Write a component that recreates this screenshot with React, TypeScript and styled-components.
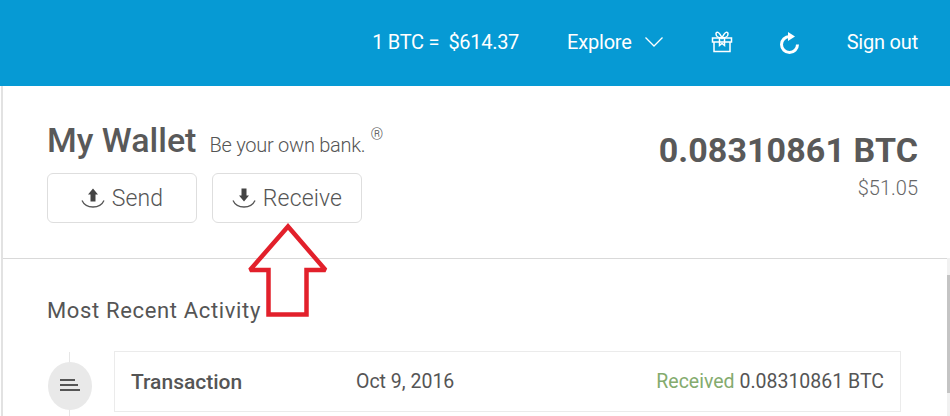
import React from 'react';
import styled, { createGlobalStyle } from 'styled-components';

const GlobalStyle = createGlobalStyle`
    html, body {
        margin: 0;
        padding: 0;
        background: #fff;
        overflow: hidden;
    }
    body {
        font-family: Roboto, "Liberation Sans", sans-serif;
        color: #555;
    }
`

const Page = styled.div`
    width: 950px;
    height: 416px;
    position: relative;
    overflow: hidden;
    background: #fff;
`

const TopBar = styled.header`
    height: 86px;
    background: #069ad4;
    color: #fff;
    display: flex;
    align-items: center;
    justify-content: flex-end;
    padding: 0 32px 3px 0;
    box-sizing: border-box;
    font-size: 20px;
    letter-spacing: -0.2px;
`

const Rate = styled.span`
    margin-right: 48px;
    white-space: pre;
    letter-spacing: -0.3px;
`

const Explore = styled.span`
    display: flex;
    align-items: center;
    gap: 12px;
    margin-right: 47px;
`

const NavIcon = styled.svg`
    display: block;
    fill: none;
    stroke: #fff;
`

const GiftIcon = styled(NavIcon)`
    margin-right: 46px;
`

const RefreshIcon = styled(NavIcon)`
    margin-right: 47px;
    margin-top: 4px;
`

const Main = styled.main`
    border-left: 2px solid #e2e2e2;
    margin-left: 1px;
`

const WalletHead = styled.section`
    height: 173px;
    box-sizing: border-box;
    border-bottom: 1px solid #d9d9d9;
    padding: 34px 32px 0 44px;
    display: flex;
    justify-content: space-between;
`

const TitleRow = styled.div`
    display: flex;
    align-items: baseline;
    height: 53px;
`

const Title = styled.h1`
    margin: 0;
    font-size: 34px;
    line-height: 40px;
    font-weight: 500;
    color: #595959;
`

const Tagline = styled.span`
    margin-left: 13px;
    font-size: 20px;
    font-weight: 300;
    letter-spacing: -0.25px;
    color: #555;
    position: relative;
`

const Mark = styled.sup`
    font-size: 16px;
    line-height: 0;
    margin-left: 5px;
    vertical-align: 12px;
`

const Actions = styled.div`
    display: flex;
    gap: 15px;
`

const ActionButton = styled.button`
    width: 150px;
    height: 50px;
    box-sizing: border-box;
    background: #fff;
    border: 1px solid #dedede;
    border-radius: 6px;
    display: flex;
    align-items: center;
    justify-content: center;
    gap: 7px;
    padding: 0;
    font-family: inherit;
    font-size: 23px;
    font-weight: 300;
    letter-spacing: 0.15px;
    color: #555;
`

const Balance = styled.div`
    text-align: right;
    padding-top: 11px;
`

const Amount = styled.div`
    font-size: 34px;
    line-height: 38px;
    font-weight: 700;
    letter-spacing: 0.1px;
    color: #595959;
`

const Fiat = styled.div`
    font-size: 20px;
    line-height: 24px;
    font-weight: 300;
    color: #666;
    margin-top: 7px;
`

const Activity = styled.section`
    padding: 38px 49px 0 44px;
`

const ActivityTitle = styled.h2`
    margin: 0 0 26px;
    font-size: 22px;
    line-height: 28px;
    font-weight: 400;
    letter-spacing: 0.65px;
    color: #555;
`

const ActivityRow = styled.div`
    display: flex;
    align-items: flex-start;
    position: relative;
`

const Timeline = styled.div`
    width: 67px;
    height: 65px;
    flex: none;
    position: relative;
    display: flex;
    justify-content: flex-start;
    padding-top: 11px;
    box-sizing: border-box;

    &::before {
        content: '';
        position: absolute;
        left: 22px;
        top: 1px;
        bottom: 0;
        width: 1px;
        background: #e6e6e6;
    }
`

const Bubble = styled.div`
    width: 44px;
    height: 48px;
    margin-left: 1px;
    padding-bottom: 3px;
    box-sizing: border-box;
    border-radius: 50%;
    background: #e9e9e9;
    display: flex;
    align-items: center;
    justify-content: center;
    position: relative;
`

const Card = styled.div`
    flex: 1;
    height: 61px;
    box-sizing: border-box;
    border: 1px solid #ebebeb;
    display: flex;
    align-items: center;
    padding: 0 16px;
    color: #555;
`

const CardTitle = styled.span`
    width: 225px;
    font-size: 21px;
    font-weight: 500;
`

const CardDate = styled.span`
    flex: 1;
    font-size: 19.5px;
`

const CardAmount = styled.span`
    font-size: 19.5px;
`

const Received = styled.span`
    color: #84ab6e;
`

const ScrollTrack = styled.div`
    position: absolute;
    right: 0;
    top: 258px;
    bottom: 0;
    width: 3px;
    background: #f1f1f1;
`

const ScrollThumb = styled.div`
    margin-top: 17px;
    height: 118px;
    background: #c4c4c4;
`

const Callout = styled.svg`
    position: absolute;
    left: 240px;
    top: 216px;
    fill: none;
    stroke: #e2202b;
    stroke-width: 4.5;
    stroke-linejoin: miter;
    stroke-miterlimit: 2;
`

const Share: React.FC<{ up: boolean }> = ({ up }) => (
    <svg width="24" height="24" viewBox="0 0 24 24">
        <path d="M1 14.5c2.5 5.5 7 6.5 11 6.5s8.500-1 11-6.500" fill="none" stroke="#555" strokeWidth="1.300" />
        {up
            ? <path d="M12 2.500L17 8.500H14.500V15.500H9.500V8.500H7Z" fill="#444" />
            : <path d="M9.500 2.500H14.500V9.500H17L12 15.500L7 9.500H9.500Z" fill="#444" />}
    </svg>
);

const App: React.FC = () => {
    return <Page>
        <GlobalStyle />
        <TopBar>
            <Rate>1 BTC =  $614.37</Rate>
            <Explore>
                Explore
                <NavIcon width="20" height="12" viewBox="0 0 20 12" strokeWidth="1.300">
                    <path d="M1.500 1.500L10 10L18.500 1.500" />
                </NavIcon>
            </Explore>
            <GiftIcon width="22" height="23" viewBox="0 0 22 23" strokeWidth="1.500">
                <path d="M1.500 8H20.500V12H1.500ZM3 12V21.500H19V12" />
                <path d="M11 8C8 8 5 6.500 5 4S8 .8 11 8C14 .8 17 1.500 17 4S14 8 11 8Z" />
                <path d="M8.500 8V15.500L11 13.500L13.500 15.500V8" />
            </GiftIcon>
            <RefreshIcon width="21" height="24" viewBox="0 0 21 24" strokeWidth="3">
                <path d="M10.500 4.500A8 8 0 1 0 18.500 12.500" />
                <path d="M9 0L16 4.500L9 9Z" fill="#fff" stroke="none" />
            </RefreshIcon>
            Sign out
        </TopBar>
        <Main>
            <WalletHead>
                <div>
                    <TitleRow>
                        <Title>My Wallet</Title>
                        <Tagline>Be your own bank.<Mark>®</Mark></Tagline>
                    </TitleRow>
                    <Actions>
                        <ActionButton><Share up />Send</ActionButton>
                        <ActionButton><Share up={false} />Receive</ActionButton>
                    </Actions>
                </div>
                <Balance>
                    <Amount>0.08310861 BTC</Amount>
                    <Fiat>$51.05</Fiat>
                </Balance>
            </WalletHead>
            <Activity>
                <ActivityTitle>Most Recent Activity</ActivityTitle>
                <ActivityRow>
                    <Timeline>
                        <Bubble>
                            <svg width="22" height="14" viewBox="0 0 22 14" fill="none" stroke="#555" strokeWidth="1.800">
                                <path d="M1 2H16M1 7H19M1 12H21" />
                            </svg>
                        </Bubble>
                    </Timeline>
                    <Card>
                        <CardTitle>Transaction</CardTitle>
                        <CardDate>Oct 9, 2016</CardDate>
                        <CardAmount><Received>Received</Received> 0.08310861 BTC</CardAmount>
                    </Card>
                </ActivityRow>
            </Activity>
        </Main>
        <ScrollTrack><ScrollThumb /></ScrollTrack>
        <Callout width="96" height="104" viewBox="0 0 96 104">
            <path d="M48 10.500L10 54H28.500V98.500H66.500V54H85.500Z" />
        </Callout>
    </Page>
}

export default App;
